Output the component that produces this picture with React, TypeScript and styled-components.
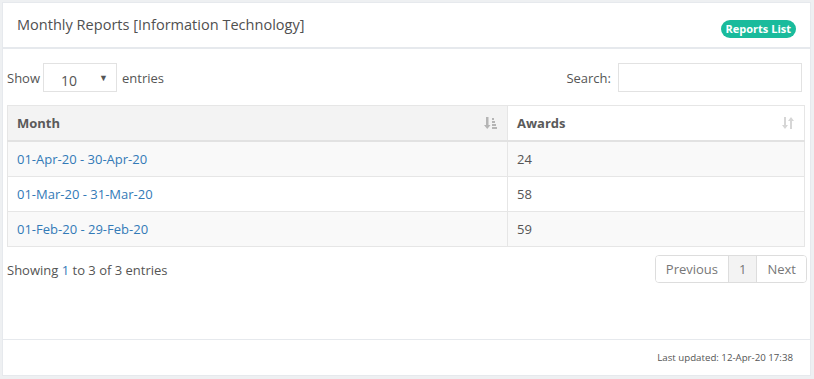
import React from "react";
import styled, { createGlobalStyle } from "styled-components";

const Global = createGlobalStyle`
  html, body { margin: 0; padding: 0; }
  body {
    background: #eef0f2;
    font-family: "Open Sans", "Liberation Sans", Arial, sans-serif;
    font-size: 13px;
    color: #555;
  }
`;

const Page = styled.div`
  padding: 2px 3px 3px 2px;
`;

const Panel = styled.div`
  background: #fff;
  border: 1px solid #e6e9ed;
  height: 372px;
  display: flex;
  flex-direction: column;
`;

const Header = styled.div`
  display: flex;
  align-items: center;
  justify-content: space-between;
  height: 44px;
  padding: 0 14px;
  border-bottom: 2px solid #e6e9ed;
`;

const Title = styled.h2`
  margin: 0;
  font-size: 14.55px;
  font-weight: 400;
  color: #505050;
  position: relative;
  top: -1px;
`;

const Badge = styled.span`
  background: #1abb9c;
  color: #fff;
  font-weight: 700;
  font-size: 11px;
  line-height: 18px;
  padding: 0 5px;
  border-radius: 9px;
  margin-top: 8px;
`;

const Body = styled.div`
  padding: 14px 3px 0 4px;
  flex: 1;
`;

const Controls = styled.div`
  display: flex;
  align-items: center;
  justify-content: space-between;
  padding-right: 5px;
  height: 29px;
`;

const Label = styled.label<{ $gap: number }>`
  display: flex;
  align-items: center;
  gap: ${(p) => p.$gap}px;
  color: #555;
`;

const Select = styled.div`
  display: flex;
  align-items: center;
  justify-content: space-between;
  padding: 0 8px 0 17px;
  box-sizing: border-box;
  width: 74px;
  height: 29px;
  border: 1px solid #e2e2e2;
  font-size: 14px;
  color: #555;
`;

const SelectValue = styled.span`
  position: relative;
  top: 3px;
`;

const Caret = styled.span`
  font-size: 9px;
  color: #555;
`;

const Entries = styled.span`
  margin-left: 2px;
`;

const Input = styled.div`
  width: 184px;
  height: 29px;
  border: 1px solid #e2e2e2;
  box-sizing: border-box;
  margin-left: 2px;
`;

const Table = styled.table`
  width: 798px;
  border-collapse: collapse;
  margin-top: 13px;
  border: 1px solid #e6e6e6;
`;

const Th = styled.th<{ $sorted?: boolean; $w?: number }>`
  text-align: left;
  font-weight: 700;
  font-size: 13px;
  color: #5a5a5a;
  height: 34px;
  padding: 0 9px;
  ${(p) => (p.$w ? `width: ${p.$w}px;` : "")}
  background: ${(p) => (p.$sorted ? "#f3f3f3" : "#fff")};
  border-right: 1px solid #e6e6e6;
  border-bottom: 2px solid #e2e2e2;
`;

const ThInner = styled.div`
  display: flex;
  align-items: center;
  justify-content: space-between;
`;

const Tr = styled.tr<{ $odd?: boolean }>`
  background: ${(p) => (p.$odd ? "#f9f9f9" : "#fff")};
`;

const Td = styled.td`
  height: 34px;
  padding: 0 9px;
  border-right: 1px solid #e6e6e6;
  border-top: 1px solid #e6e6e6;
  color: #555;
  font-size: 13px;
`;

const Link = styled.a`
  color: #337ab7;
  text-decoration: none;
`;

const Bottom = styled.div`
  display: flex;
  align-items: center;
  justify-content: space-between;
  margin-top: 8px;
`;

const Info = styled.div`
  color: #555;
  position: relative;
  top: 1px;
`;

const Hl = styled.span`
  color: #337ab7;
`;

const Pager = styled.div`
  display: flex;
  border: 1px solid #ddd;
  border-radius: 4px;
  overflow: hidden;
  height: 26px;
`;

const PageBtn = styled.span<{ $active?: boolean }>`
  display: flex;
  align-items: center;
  padding: 0 10px;
  color: #777;
  font-size: 13px;
  background: ${(p) => (p.$active ? "#f3f3f3" : "#fff")};
  & + & { border-left: 1px solid #ddd; }
`;

const Footer = styled.div`
  border-top: 1px solid #e6e9ed;
  height: 35px;
  display: flex;
  align-items: center;
  justify-content: flex-end;
  padding-right: 17px;
  font-size: 9.7px;
  color: #555;
`;

const SortAsc = () => (
  <svg width="14" height="14" viewBox="0 0 14 14">
    <g fill="#b5b5b5">
      <rect x="2" y="1" width="2.5" height="9" />
      <polygon points="0,9 6.5,9 3.25,13" />
      <rect x="8" y="2" width="2" height="2" />
      <rect x="8" y="5" width="3" height="2" />
      <rect x="8" y="8" width="4" height="2" />
      <rect x="8" y="11" width="5" height="2" />
    </g>
  </svg>
);

const SortBoth = () => (
  <svg width="14" height="14" viewBox="0 0 14 14">
    <g fill="#d6d6d6">
      <rect x="3" y="1" width="2" height="9" />
      <polygon points="1,9 7,9 4,13" />
      <rect x="9" y="4" width="2" height="9" />
      <polygon points="7,5 13,5 10,1" />
    </g>
  </svg>
);

const rows = [
  { m: "01-Apr-20 - 30-Apr-20", a: 24 },
  { m: "01-Mar-20 - 31-Mar-20", a: 58 },
  { m: "01-Feb-20 - 29-Feb-20", a: 59 },
];

export default function App() {
  return (
    <Page>
      <Global />
      <Panel>
        <Header>
          <Title>Monthly Reports [Information Technology]</Title>
          <Badge>Reports List</Badge>
        </Header>
        <Body>
          <Controls>
            <Label $gap={3}>
              Show
              <Select>
                <SelectValue>10</SelectValue>
                <Caret>▼</Caret>
              </Select>
              <Entries>entries</Entries>
            </Label>
            <Label $gap={5}>
              Search:
              <Input />
            </Label>
          </Controls>
          <Table>
            <thead>
              <tr>
                <Th $sorted $w={481}>
                  <ThInner>
                    Month
                    <SortAsc />
                  </ThInner>
                </Th>
                <Th>
                  <ThInner>
                    Awards
                    <SortBoth />
                  </ThInner>
                </Th>
              </tr>
            </thead>
            <tbody>
              {rows.map((r, i) => (
                <Tr key={r.m} $odd={i % 2 === 0}>
                  <Td>
                    <Link href="#">{r.m}</Link>
                  </Td>
                  <Td>{r.a}</Td>
                </Tr>
              ))}
            </tbody>
          </Table>
          <Bottom>
            <Info>
              Showing <Hl>1</Hl> to 3 of 3 entries
            </Info>
            <Pager>
              <PageBtn>Previous</PageBtn>
              <PageBtn $active>1</PageBtn>
              <PageBtn>Next</PageBtn>
            </Pager>
          </Bottom>
        </Body>
        <Footer>Last updated: 12-Apr-20 17:38</Footer>
      </Panel>
    </Page>
  );
}
